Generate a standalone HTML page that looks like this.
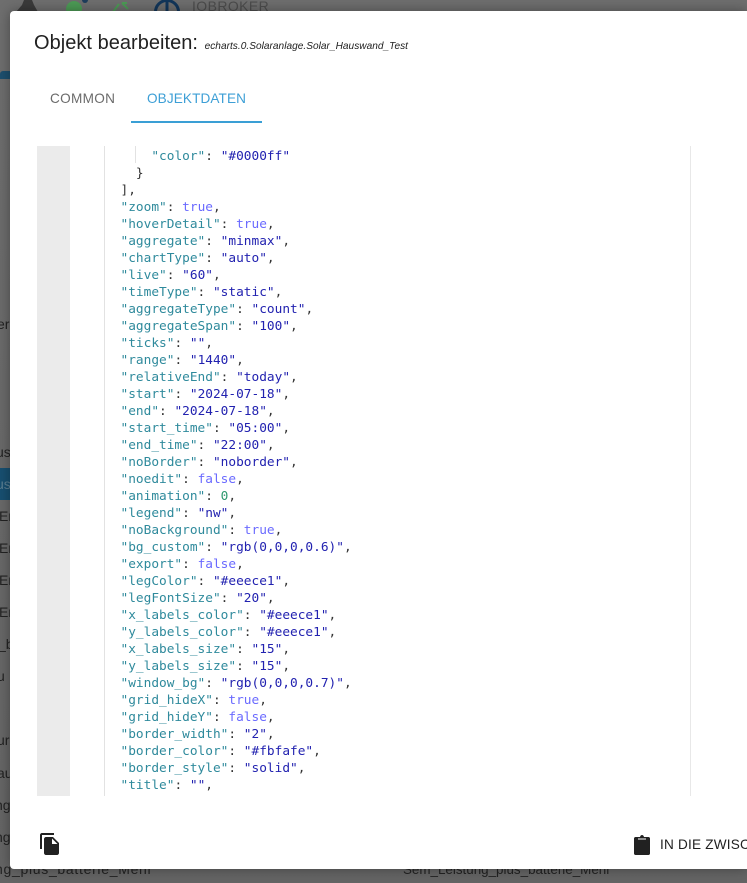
<!DOCTYPE html>
<html lang="de">
<head>
<meta charset="utf-8">
<title>Objekt bearbeiten</title>
<style>
html,body{margin:0;padding:0;width:747px;height:883px;overflow:hidden;background:#666;font-family:"Liberation Sans",sans-serif}
.bg{position:absolute;height:17px;font-size:14px;line-height:17px;color:#222;white-space:nowrap}
.abs{position:absolute}
#shade{position:absolute;left:0;top:0;width:747px;height:883px;background:linear-gradient(#6e6e6e,#646464)}
#modal{position:absolute;left:10px;top:11px;width:737px;height:858px;background:#fff;border-radius:4px 0 0 4px;box-shadow:0 0 12px rgba(0,0,0,.35)}
.ln{position:absolute;left:0;height:17px;line-height:17px;white-space:pre;font-family:"DejaVu Sans Mono","Liberation Mono",monospace;font-size:12.8px;color:#333}
.k{color:#2f8a9c}.s{color:#2222b0}.b{color:#6a6aff}.n{color:#2f9a70}
</style>
</head>
<body>
<div id="shade"></div>
<svg class="abs" style="left:0;top:0" width="300" height="14" viewBox="0 0 300 14">
<path d="M16 12 L22 5 L24 0 L32 0 L34 5 L38 12Z" fill="#3a3a3a"/>
<circle cx="74" cy="9" r="8" fill="#4c9a55"/><circle cx="85" cy="0" r="3" fill="#1e3d5c"/>
<path d="M113 12 L119 4" stroke="#4c9a55" stroke-width="2" fill="none"/><path d="M122 3 L128 9 M122 3h5" stroke="#4c9a55" stroke-width="2" fill="none"/>
<circle cx="167" cy="12" r="11.500" fill="none" stroke="#12365a" stroke-width="3"/><rect x="165.500" y="0" width="3" height="14" fill="#12365a"/>
</svg>
<div class="abs" style="left:192px;top:-2px;font-size:14px;line-height:17px;letter-spacing:.4px;color:#4c4c4c">IOBROKER</div>
<div class="abs" style="left:0;top:71px;width:10px;height:8px;border-radius:3px 0 0 0;background:#1d4f6e"></div>
<div class="bg" style="left:-3px;top:316px">er</div>
<div class="bg" style="left:-4px;top:444px">us</div>
<div class="abs" style="left:0;top:468px;width:10px;height:32px;background:#174f70"></div>
<div class="bg" style="left:-4px;top:476px;color:#5c7f92">us</div>
<div class="bg" style="left:-1px;top:508px">Er</div>
<div class="bg" style="left:-1px;top:540px">Er</div>
<div class="bg" style="left:-1px;top:572px">Er</div>
<div class="bg" style="left:-1px;top:604px">Er</div>
<div class="bg" style="left:-2px;top:636px">_b</div>
<div class="bg" style="left:-3px;top:668px">u</div>
<div class="bg" style="left:-3px;top:732px">ur</div>
<div class="bg" style="left:-3px;top:765px">au</div>
<div class="bg" style="left:-5px;top:797px">ng</div>
<div class="bg" style="left:-5px;top:829px">ng</div>
<div class="bg" style="left:-5px;top:861px;letter-spacing:.7px">ng_plus_batterie_Mehr</div>
<div class="bg" style="left:403px;top:861px;font-size:13.400px">Sem_Leistung_plus_batterie_Mehr</div>

<div id="modal"></div>
<div class="abs" style="left:34px;top:30px;font-size:20px;line-height:26px;letter-spacing:.03px;color:#212121;white-space:nowrap">Objekt bearbeiten: <span style="font-size:10.100px;font-style:italic;margin-left:1px">echarts.0.Solaranlage.Solar_Hauswand_Test</span></div>
<div class="abs" style="left:50px;top:90px;font-size:13.600px;line-height:17px;letter-spacing:.3px;color:#6b6b6b">COMMON</div>
<div class="abs" style="left:147px;top:90px;font-size:13.600px;line-height:17px;letter-spacing:.1px;color:#3d9fd6">OBJEKTDATEN</div>
<div class="abs" style="left:131px;top:121px;width:131px;height:2px;background:#3a9fd5"></div>

<div class="abs" style="left:37px;top:146px;width:33px;height:650px;background:#ebebeb"></div>
<div class="abs" style="left:104px;top:146px;width:1px;height:650px;background:#e2e2e2"></div>
<div class="abs" style="left:135px;top:146px;width:1px;height:17px;background:#e2e2e2"></div>
<div class="abs" style="left:690px;top:146px;width:1px;height:650px;background:#e8e8e8"></div>

<div class="abs" style="left:120.500px;top:148px;width:560px;height:648px;overflow:hidden">
<div class="ln" style="top:0">    <span class="k">"color"</span>: <span class="s">"#0000ff"</span></div>
<div class="ln" style="top:17px">  }</div>
<div class="ln" style="top:34px">],</div>
<div class="ln" style="top:51px"><span class="k">"zoom"</span>: <span class="b">true</span>,</div>
<div class="ln" style="top:68px"><span class="k">"hoverDetail"</span>: <span class="b">true</span>,</div>
<div class="ln" style="top:85px"><span class="k">"aggregate"</span>: <span class="s">"minmax"</span>,</div>
<div class="ln" style="top:102px"><span class="k">"chartType"</span>: <span class="s">"auto"</span>,</div>
<div class="ln" style="top:119px"><span class="k">"live"</span>: <span class="s">"60"</span>,</div>
<div class="ln" style="top:136px"><span class="k">"timeType"</span>: <span class="s">"static"</span>,</div>
<div class="ln" style="top:153px"><span class="k">"aggregateType"</span>: <span class="s">"count"</span>,</div>
<div class="ln" style="top:170px"><span class="k">"aggregateSpan"</span>: <span class="s">"100"</span>,</div>
<div class="ln" style="top:187px"><span class="k">"ticks"</span>: <span class="s">""</span>,</div>
<div class="ln" style="top:204px"><span class="k">"range"</span>: <span class="s">"1440"</span>,</div>
<div class="ln" style="top:221px"><span class="k">"relativeEnd"</span>: <span class="s">"today"</span>,</div>
<div class="ln" style="top:238px"><span class="k">"start"</span>: <span class="s">"2024-07-18"</span>,</div>
<div class="ln" style="top:255px"><span class="k">"end"</span>: <span class="s">"2024-07-18"</span>,</div>
<div class="ln" style="top:272px"><span class="k">"start_time"</span>: <span class="s">"05:00"</span>,</div>
<div class="ln" style="top:289px"><span class="k">"end_time"</span>: <span class="s">"22:00"</span>,</div>
<div class="ln" style="top:306px"><span class="k">"noBorder"</span>: <span class="s">"noborder"</span>,</div>
<div class="ln" style="top:323px"><span class="k">"noedit"</span>: <span class="b">false</span>,</div>
<div class="ln" style="top:340px"><span class="k">"animation"</span>: <span class="n">0</span>,</div>
<div class="ln" style="top:357px"><span class="k">"legend"</span>: <span class="s">"nw"</span>,</div>
<div class="ln" style="top:374px"><span class="k">"noBackground"</span>: <span class="b">true</span>,</div>
<div class="ln" style="top:391px"><span class="k">"bg_custom"</span>: <span class="s">"rgb(0,0,0,0.6)"</span>,</div>
<div class="ln" style="top:408px"><span class="k">"export"</span>: <span class="b">false</span>,</div>
<div class="ln" style="top:425px"><span class="k">"legColor"</span>: <span class="s">"#eeece1"</span>,</div>
<div class="ln" style="top:442px"><span class="k">"legFontSize"</span>: <span class="s">"20"</span>,</div>
<div class="ln" style="top:459px"><span class="k">"x_labels_color"</span>: <span class="s">"#eeece1"</span>,</div>
<div class="ln" style="top:476px"><span class="k">"y_labels_color"</span>: <span class="s">"#eeece1"</span>,</div>
<div class="ln" style="top:493px"><span class="k">"x_labels_size"</span>: <span class="s">"15"</span>,</div>
<div class="ln" style="top:510px"><span class="k">"y_labels_size"</span>: <span class="s">"15"</span>,</div>
<div class="ln" style="top:527px"><span class="k">"window_bg"</span>: <span class="s">"rgb(0,0,0,0.7)"</span>,</div>
<div class="ln" style="top:544px"><span class="k">"grid_hideX"</span>: <span class="b">true</span>,</div>
<div class="ln" style="top:561px"><span class="k">"grid_hideY"</span>: <span class="b">false</span>,</div>
<div class="ln" style="top:578px"><span class="k">"border_width"</span>: <span class="s">"2"</span>,</div>
<div class="ln" style="top:595px"><span class="k">"border_color"</span>: <span class="s">"#fbfafe"</span>,</div>
<div class="ln" style="top:612px"><span class="k">"border_style"</span>: <span class="s">"solid"</span>,</div>
<div class="ln" style="top:629px"><span class="k">"title"</span>: <span class="s">""</span>,</div>
</div>

<svg class="abs" style="left:38px;top:832px" width="24" height="24" viewBox="0 0 24 24"><path fill="#212121" d="M16 1H4c-1.100 0-2 .900-2 2v14h2V3h12V1zm-1 4 6 6v10c0 1.100-.900 2-2 2H7.990C6.890 23 6 22.100 6 21l.010-14c0-1.100.890-2 1.990-2h7zm-1 7h5.500L14 6.500V12z"/></svg>
<svg class="abs" style="left:630px;top:833px" width="24" height="24" viewBox="0 0 24 24"><path fill="#212121" fill-rule="evenodd" d="M10 4c.3-1.200 1.100-2 2-2s1.700.800 2 2h4.500c.8 0 1.500.700 1.500 1.500v15c0 .800-.700 1.500-1.500 1.500h-13c-.8 0-1.500-.700-1.500-1.500v-15C4 4.700 4.700 4 5.500 4zM8 5.500v1h8v-1z"/></svg>
<div class="abs" style="left:660px;top:836px;width:87px;height:17px;overflow:hidden;font-size:13.600px;line-height:17px;letter-spacing:.2px;color:#212121;white-space:nowrap">IN DIE ZWISCHENABLAGE</div>
</body>
</html>
